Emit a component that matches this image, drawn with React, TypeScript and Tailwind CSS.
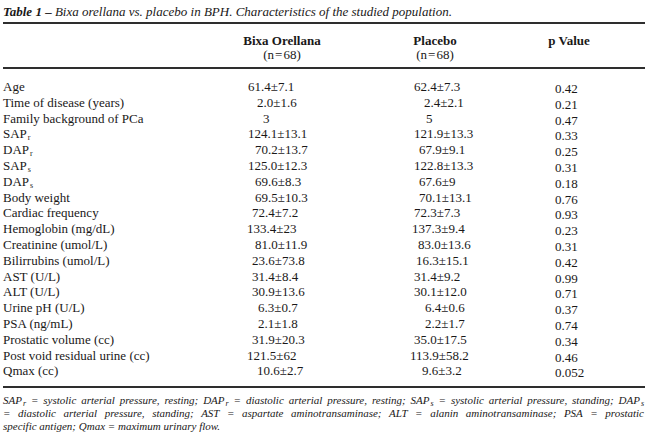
import React from "react";

type Row = { label: React.ReactNode; a: string; ao: number; b: string; bo: number; p: string };

const Sub = ({ c }: { c: string }) => (
  <sub className="text-[8px] relative top-[2px] ml-[1px] align-baseline">{c}</sub>
);

const rows: Row[] = [
  { label: "Age", a: "61.4±7.1", ao: 0, b: "62.4±7.3", bo: 0, p: "0.42" },
  { label: "Time of disease (years)", a: "2.0±1.6", ao: 9, b: "2.4±2.1", bo: 10, p: "0.21" },
  { label: "Family background of PCa", a: "3", ao: 15, b: "5", bo: 12, p: "0.47" },
  { label: <>SAP<Sub c="r" /></>, a: "124.1±13.1", ao: 0, b: "121.9±13.3", bo: 0, p: "0.33" },
  { label: <>DAP<Sub c="r" /></>, a: "70.2±13.7", ao: 7, b: "67.9±9.1", bo: 5, p: "0.25" },
  { label: <>SAP<Sub c="s" /></>, a: "125.0±12.3", ao: 0, b: "122.8±13.3", bo: 0, p: "0.31" },
  { label: <>DAP<Sub c="s" /></>, a: "69.6±8.3", ao: 7, b: "67.6±9", bo: 5, p: "0.18" },
  { label: "Body weight", a: "69.5±10.3", ao: 7, b: "70.1±13.1", bo: 5, p: "0.76" },
  { label: "Cardiac frequency", a: "72.4±7.2", ao: 4, b: "72.3±7.3", bo: 0, p: "0.93" },
  { label: "Hemoglobin (mg/dL)", a: "133.4±23", ao: -1, b: "137.3±9.4", bo: -2, p: "0.23" },
  { label: "Creatinine (umol/L)", a: "81.0±11.9", ao: 7, b: "83.0±13.6", bo: 4, p: "0.31" },
  { label: "Bilirrubins (umol/L)", a: "23.6±73.8", ao: 4, b: "16.3±15.1", bo: 2, p: "0.42" },
  { label: "AST (U/L)", a: "31.4±8.4", ao: 4, b: "31.4±9.2", bo: 0, p: "0.99" },
  { label: "ALT (U/L)", a: "30.9±13.6", ao: 4, b: "30.1±12.0", bo: 0, p: "0.71" },
  { label: "Urine pH (U/L)", a: "6.3±0.7", ao: 10, b: "6.4±0.6", bo: 11, p: "0.37" },
  { label: "PSA (ng/mL)", a: "2.1±1.8", ao: 10, b: "2.2±1.7", bo: 11, p: "0.74" },
  { label: "Prostatic volume (cc)", a: "31.9±20.3", ao: 4, b: "35.0±17.5", bo: 0, p: "0.34" },
  { label: "Post void residual urine (cc)", a: "121.5±62", ao: -1, b: "113.9±58.2", bo: -4, p: "0.46" },
  { label: "Qmax (cc)", a: "10.6±2.7", ao: 9, b: "9.6±3.2", bo: 8, p: "0.052" },
];

export default function App() {
  return (
    <div
      className="w-[650px] h-[440px] bg-white text-[#1a1818] overflow-hidden"
      style={{ fontFamily: '"Liberation Serif", "Times New Roman", serif' }}
    >
      <div className="pl-[3px] pt-[4px] h-[22px] text-[13px] leading-[16px] italic">
        <b>Table 1 –</b> Bixa orellana vs. placebo in BPH. Characteristics of the studied population.
      </div>
      <div className="ml-[3px] mr-[5px] h-[2px] bg-[#2e2e2e]" />
      <div className="flex h-[43px] pt-[10px] text-[13px] leading-[13.5px]">
        <div className="w-[243px]" />
        <div className="w-[78px] flex flex-col items-center">
          <b>Bixa Orellana</b>
          <span>(n&#8202;=&#8202;68)</span>
        </div>
        <div className="w-[74px]" />
        <div className="w-[80px] flex flex-col items-center">
          <b>Placebo</b>
          <span>(n&#8202;=&#8202;68)</span>
        </div>
        <div className="w-[72px]" />
        <div className="w-[44px] flex flex-col items-center">
          <b>p Value</b>
        </div>
      </div>
      <div className="ml-[3px] mr-[5px] h-[2px] bg-[#2e2e2e]" />
      <div className="pt-[10px] h-[317px] text-[13px]">
        {rows.map((r, i) => (
          <div key={i} className="flex h-[15.8px] leading-[15.8px] whitespace-nowrap">
            <div className="w-[248px] pl-[3px]">{r.label}</div>
            <div className="w-[166px]">
              <span className="inline-block" style={{ marginLeft: r.ao }}>{r.a}</span>
            </div>
            <div className="w-[141px]">
              <span className="inline-block" style={{ marginLeft: r.bo }}>{r.b}</span>
            </div>
            <div className="pt-[2px]">{r.p}</div>
          </div>
        ))}
      </div>
      <div className="ml-[3px] mr-[5px] h-[2px] bg-[#2e2e2e]" />
      <div className="pl-[3px] pr-[6px] pt-[6px] text-[11px] leading-[13px] italic text-justify">
        <div className="[text-align-last:justify] whitespace-nowrap">
          SAP<Sub c="r" /> = systolic arterial pressure, resting; DAP<Sub c="r" /> = diastolic arterial pressure, resting; SAP<Sub c="s" /> = systolic arterial pressure, standing; DAP<Sub c="s" />
        </div>
        <div className="[text-align-last:justify]">
          = diastolic arterial pressure, standing; AST = aspartate aminotransaminase; ALT = alanin aminotransaminase; PSA = prostatic
        </div>
        <div>specific antigen; Qmax = maximum urinary flow.</div>
      </div>
    </div>
  );
}
